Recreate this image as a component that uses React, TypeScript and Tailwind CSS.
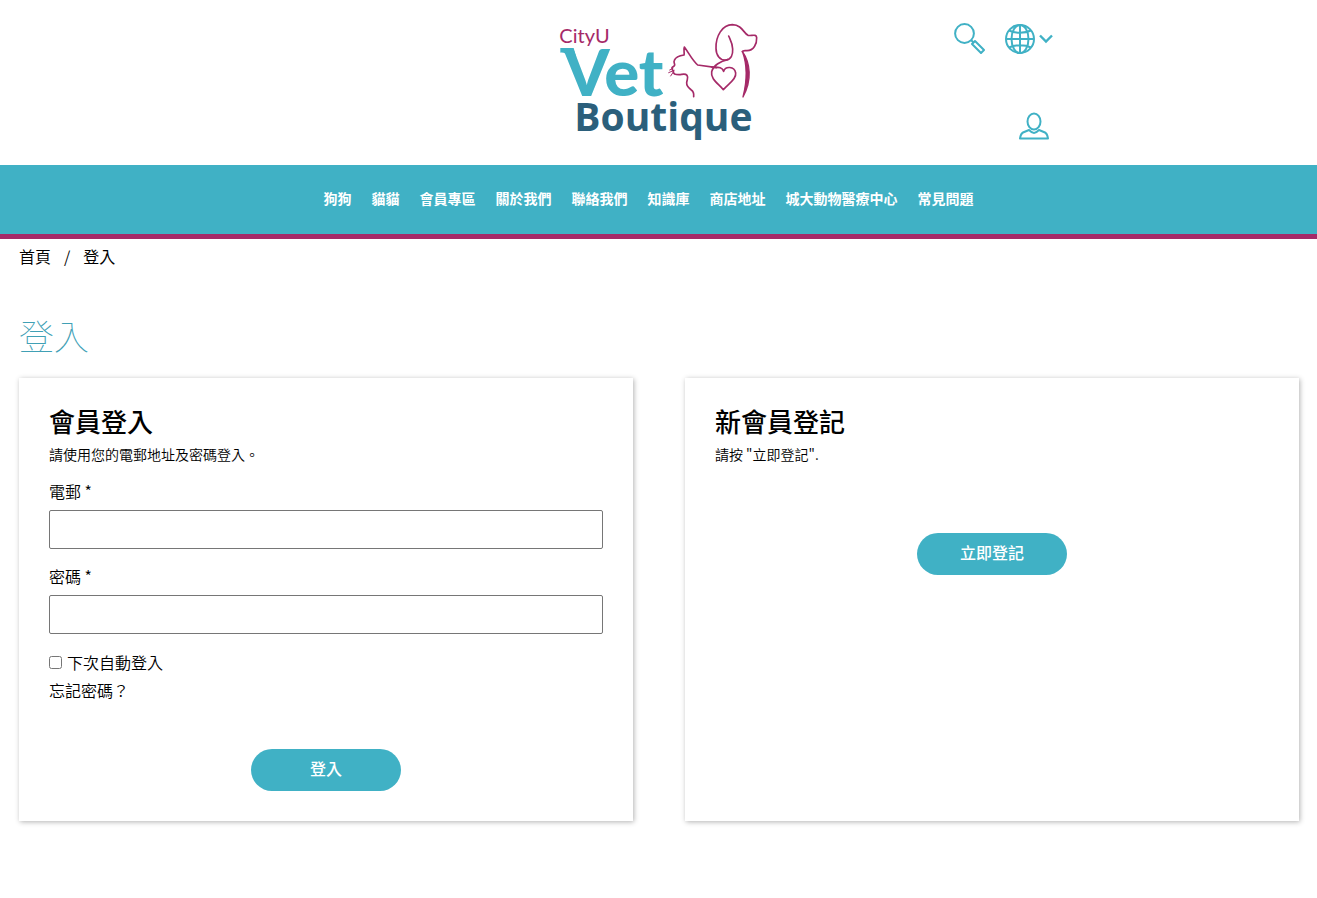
import { useState } from 'react';
import type { FormEvent } from 'react';

const navItems = [
  '狗狗',
  '貓貓',
  '會員專區',
  '關於我們',
  '聯絡我們',
  '知識庫',
  '商店地址',
  '城大動物醫療中心',
  '常見問題',
];

const buttonClass =
  'block h-[42px] w-[150px] rounded-full bg-[#40b1c5] text-center text-base leading-[38px] font-medium text-white hover:bg-[#3599ab]';

function Logo() {
  return (
    <svg viewBox="-4 0 660 405" className="h-[135px] w-[220px]" role="img" aria-label="CityU Vet Boutique">
      <text x="27" y="83" fontSize="60" fontWeight="400" fill="#a52a68" fontFamily="Lato, sans-serif">CityU</text>
      <path d="M30 99h40l8 28H52c-4-11-10-15-22-14z" fill="#40b1c5" />
      <text x="40" y="243" fontSize="196" fontWeight="900" fill="#40b1c5" fontFamily="Lato, sans-serif">Vet</text>
      <text x="72" y="347" fontSize="117" fontWeight="700" fill="#2b5f7b" fontFamily="'Open Sans', sans-serif">Boutique</text>
      <g transform="translate(327 0)" fill="none" stroke="#a52a68" strokeWidth="5" strokeLinecap="round" strokeLinejoin="round">
        {/* cat */}
        <path d="M103 245c1-9-1-16-7-20-8-6-15-12-14-22 1-9 6-15 1-22-6-7-15-2-24-2-11 0-17-2-17-9-1-5-5-7-4-12 2-4 8-4 8-8 0-5-4-8-1-14 4-10 13-14 29-16 2-7-2-17 1-24 13 17 23 39 40 54l57 8" />
        <path d="M44 166l-16 7M44 168l-10 15M41 160l-10 5" strokeWidth="3" />
        {/* dog */}
        <path d="M208 63c5 12 12 22 12 39 1 17-5 32-20 33-18 2-30-14-30-35-1-37 19-71 49-71 30 1 33 25 47 32 10 3 25-6 26 7 1 19-9 39-29 39-5 0-12-2-14 3" />
        <path d="M249 109c24 34 30 86 2 137 13-50 12-99-2-137z" fill="#a52a68" strokeWidth="4" />
        {/* heart */}
        <path d="M205 134c-20 4-43 17-48 36-4 22 19 35 35 54 16-19 40-32 37-50-4-21-31-21-36-5-5-13-15-12-36-13" />
      </g>
    </svg>
  );
}

function SearchIcon() {
  return (
    <svg viewBox="0 0 31 31" className="h-[31px] w-[31px]" fill="none" stroke="#40b1c5" strokeWidth="2" aria-hidden="true">
      <circle cx="10.5" cy="10.5" r="9.400" />
      <path d="M17 17l3 3" />
      <path d="M18 21l3-3 9 9-3 3z" strokeLinejoin="round" />
    </svg>
  );
}

function GlobeIcon() {
  return (
    <svg viewBox="0 0 30 30" className="h-[30px] w-[30px]" fill="none" stroke="#40b1c5" strokeWidth="2" aria-hidden="true">
      <circle cx="15" cy="15" r="14" />
      <ellipse cx="15" cy="15" rx="8.500" ry="14" />
      <path d="M15 1v28M1 15h28M4 6.500c6 3 16 3 22 0M4 23.500c6-3 16-3 22 0" />
    </svg>
  );
}

function UserIcon() {
  return (
    <svg viewBox="0 0 30 28" className="h-[28px] w-[30px]" fill="none" stroke="#40b1c5" strokeWidth="2" strokeLinejoin="round" aria-hidden="true">
      <ellipse cx="15" cy="9.500" rx="6.500" ry="8" />
      <path d="M10 18l-6 2.500c-2 1-2.500 3-3 6h28c-.5-3-1-5-3-6L20 18c-2 2-3 3-5 3s-3-1-5-3z" />
    </svg>
  );
}

function Header() {
  return (
    <header>
      <div className="mx-auto grid w-3/5 grid-cols-[1fr_auto_1fr] py-[15px]">
        <a href="/" className="col-start-2">
          <Logo />
        </a>
        <div className="flex flex-col items-end justify-between pt-2 pr-px pb-[10px]">
          <div className="flex gap-5">
            <button type="button" aria-label="搜尋">
              <SearchIcon />
            </button>
            <button type="button" aria-label="語言" className="flex items-center gap-1">
              <GlobeIcon />
              <svg viewBox="0 0 14 10" className="h-[10px] w-[14px]" fill="none" stroke="#40b1c5" strokeWidth="2.400" aria-hidden="true">
                <path d="M1 1.500l6 6 6-6" />
              </svg>
            </button>
          </div>
          <a href="/login" aria-label="會員" className="mr-1">
            <UserIcon />
          </a>
        </div>
      </div>
      <nav className="border-b-[5px] border-[#a52a68] bg-[#40b1c5]">
        <ul className="flex justify-center pb-1 leading-[65px]">
          {navItems.map((item) => (
            <li key={item} className="pr-5">
              <a href="#" className="text-sm leading-[20px] font-bold text-white hover:underline">
                {item}
              </a>
            </li>
          ))}
        </ul>
      </nav>
    </header>
  );
}

function LoginCard() {
  const [email, setEmail] = useState('');
  const [password, setPassword] = useState('');
  const [remember, setRemember] = useState(false);

  const handleSubmit = (e: FormEvent) => {
    e.preventDefault();
  };

  const labelClass = 'block pb-[2px] leading-[34px]';
  const inputClass = 'h-[39px] w-full rounded-[2px] border border-[#767676] px-2 outline-none focus:border-[#40b1c5]';

  return (
    <section className="flex-1 bg-white px-[30px] pt-6 pb-[30px] shadow-[1px_1px_5px_rgba(0,0,0,0.3)]">
      <h2 className="text-[26px] leading-[38px] font-medium">會員登入</h2>
      <p className="mb-[6px] text-sm leading-[28px]">請使用您的電郵地址及密碼登入。</p>
      <form onSubmit={handleSubmit}>
        <label htmlFor="email" className={labelClass}>電郵 *</label>
        <input id="email" type="email" className={inputClass} value={email} onChange={(e) => setEmail(e.target.value)} />
        <label htmlFor="password" className={`mt-[10px] ${labelClass}`}>密碼 *</label>
        <input id="password" type="password" className={inputClass} value={password} onChange={(e) => setPassword(e.target.value)} />
        <div className="mt-[14px] flex items-center gap-[5px] leading-[28px]">
          <input id="remember" type="checkbox" className="h-[13px] w-[13px]" checked={remember} onChange={(e) => setRemember(e.target.checked)} />
          <label htmlFor="remember">下次自動登入</label>
        </div>
        <a href="/forgot-password" className="block leading-[28px]">忘記密碼？</a>
        <button type="submit" className={`mx-auto mt-[45px] pb-1 ${buttonClass}`}>登入</button>
      </form>
    </section>
  );
}

function RegisterCard() {
  return (
    <section className="flex-1 bg-white px-[30px] pt-6 pb-[30px] shadow-[1px_1px_5px_rgba(0,0,0,0.3)]">
      <h2 className="text-[26px] leading-[38px] font-medium">新會員登記</h2>
      <p className="text-sm leading-[28px]">請按 "立即登記".</p>
      <a href="/register" className={`mx-auto mt-[65px] ${buttonClass}`}>立即登記</a>
    </section>
  );
}

export default function App() {
  return (
    <div lang="zh-Hant" className="min-h-screen bg-white font-['Noto_Sans_CJK_TC',sans-serif] text-base font-[350] text-black">
      <Header />
      <main className="pr-[18px] pb-10 pl-[19px]">
        <nav className="flex gap-[13px] leading-[34px]" aria-label="breadcrumb">
          <a href="/">首頁</a>
          <span>/</span>
          <span className="font-normal">登入</span>
        </nav>
        <h1 className="mt-[42px] mb-[23px] text-[35px] leading-[40px] font-thin text-[#40a0b5]">登入</h1>
        <div className="flex gap-[52px]">
          <LoginCard />
          <RegisterCard />
        </div>
      </main>
    </div>
  );
}
